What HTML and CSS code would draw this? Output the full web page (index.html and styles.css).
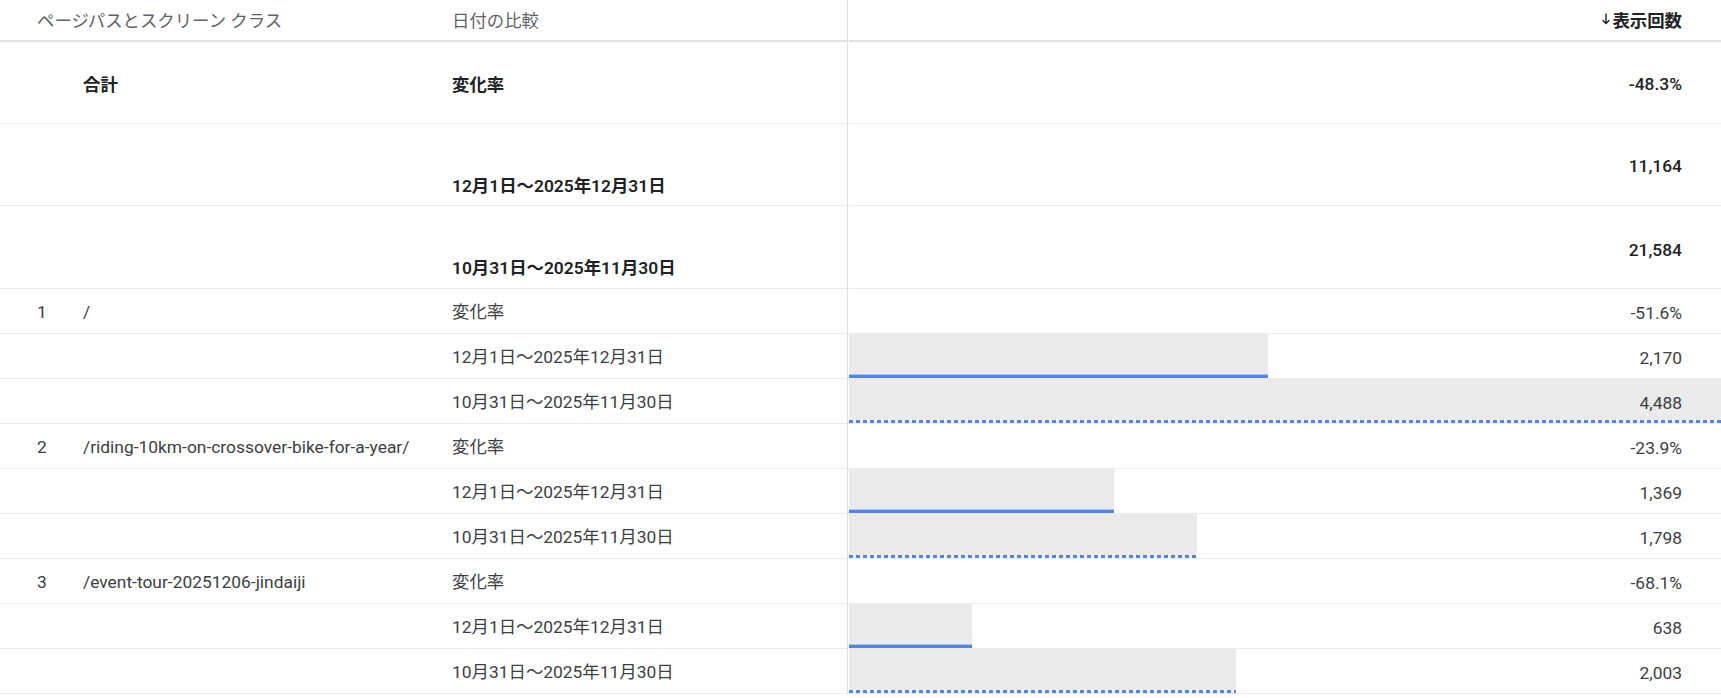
FILE: index.html
```html
<!DOCTYPE html>
<html lang="ja">
<head>
<meta charset="utf-8">
<title>ページパスとスクリーン クラス</title>
<link rel="stylesheet" href="styles.css">
</head>
<body>
<div class="report">
  <div class="row head">
    <div class="left">
      <div class="cell hlabel span2">ページパスとスクリーン クラス</div>
      <div class="cell hlabel">日付の比較</div>
    </div>
    <div class="vline"></div>
    <div class="right">
      <div class="num hmetric"><svg class="arrow" width="10" height="13" viewBox="0 0 10 13"><path d="M5 1.5V11.5M1.6 8.2L5 11.6L8.4 8.2" fill="none" stroke="#202124" stroke-width="1.4"/></svg>表示回数</div>
    </div>
  </div>

  <div class="row sum">
    <div class="left">
      <div class="cell"></div>
      <div class="cell">合計</div>
      <div class="cell">変化率</div>
    </div>
    <div class="vline"></div>
    <div class="right"><div class="num">-48.3%</div></div>
  </div>
  <div class="row sum">
    <div class="left bottom">
      <div class="cell"></div>
      <div class="cell"></div>
      <div class="cell">12月1日～2025年12月31日</div>
    </div>
    <div class="vline"></div>
    <div class="right"><div class="num">11,164</div></div>
  </div>
  <div class="row sum last">
    <div class="left bottom">
      <div class="cell"></div>
      <div class="cell"></div>
      <div class="cell">10月31日～2025年11月30日</div>
    </div>
    <div class="vline"></div>
    <div class="right"><div class="num">21,584</div></div>
  </div>

  <div class="row data">
    <div class="left">
      <div class="cell idx">1</div>
      <div class="cell">/</div>
      <div class="cell">変化率</div>
    </div>
    <div class="vline"></div>
    <div class="right"><div class="num">-51.6%</div></div>
  </div>
  <div class="row data">
    <div class="left">
      <div class="cell"></div>
      <div class="cell"></div>
      <div class="cell">12月1日～2025年12月31日</div>
    </div>
    <div class="vline"></div>
    <div class="right"><div class="bar solid" style="width:48.1%"></div><div class="num">2,170</div></div>
  </div>
  <div class="row data">
    <div class="left">
      <div class="cell"></div>
      <div class="cell"></div>
      <div class="cell">10月31日～2025年11月30日</div>
    </div>
    <div class="vline"></div>
    <div class="right"><div class="bar dotted" style="width:100%"></div><div class="num">4,488</div></div>
  </div>

  <div class="row data">
    <div class="left">
      <div class="cell idx">2</div>
      <div class="cell">/riding-10km-on-crossover-bike-for-a-year/</div>
      <div class="cell">変化率</div>
    </div>
    <div class="vline"></div>
    <div class="right"><div class="num">-23.9%</div></div>
  </div>
  <div class="row data">
    <div class="left">
      <div class="cell"></div>
      <div class="cell"></div>
      <div class="cell">12月1日～2025年12月31日</div>
    </div>
    <div class="vline"></div>
    <div class="right"><div class="bar solid" style="width:30.35%"></div><div class="num">1,369</div></div>
  </div>
  <div class="row data">
    <div class="left">
      <div class="cell"></div>
      <div class="cell"></div>
      <div class="cell">10月31日～2025年11月30日</div>
    </div>
    <div class="vline"></div>
    <div class="right"><div class="bar dotted" style="width:39.86%"></div><div class="num">1,798</div></div>
  </div>

  <div class="row data">
    <div class="left">
      <div class="cell idx">3</div>
      <div class="cell">/event-tour-20251206-jindaiji</div>
      <div class="cell">変化率</div>
    </div>
    <div class="vline"></div>
    <div class="right"><div class="num">-68.1%</div></div>
  </div>
  <div class="row data">
    <div class="left">
      <div class="cell"></div>
      <div class="cell"></div>
      <div class="cell">12月1日～2025年12月31日</div>
    </div>
    <div class="vline"></div>
    <div class="right"><div class="bar solid" style="width:14.15%"></div><div class="num">638</div></div>
  </div>
  <div class="row data">
    <div class="left">
      <div class="cell"></div>
      <div class="cell"></div>
      <div class="cell">10月31日～2025年11月30日</div>
    </div>
    <div class="vline"></div>
    <div class="right"><div class="bar dotted" style="width:44.4%"></div><div class="num">2,003</div></div>
  </div>
</div>
</body>
</html>
```

FILE: styles.css
```css
* { box-sizing: border-box; }
html, body { margin: 0; padding: 0; background: #ffffff; }
body {
  font-family: Roboto, "Noto Sans CJK JP", sans-serif;
  font-size: 17.4px;
  line-height: 20px;
  color: #3c4043;
}
.report { width: 1721px; }
.row { display: flex; }
.row.head { height: 42px; }
.row.sum { height: 82px; }
.row.sum.last { height: 83px; }
.row.data { height: 45px; }

.left {
  width: 847px;
  flex: none;
  display: grid;
  grid-template-columns: 83px 369px 1fr;
  border-bottom: 1px solid #ececec;
}
.vline { width: 1px; flex: none; background: #dedede; }
.right {
  flex: 1;
  margin-left: 1px;
  display: grid;
  grid-template-columns: 1fr;
  grid-template-rows: 1fr;
  border-bottom: 1px solid #ececec;
}
.head .left, .head .right { border-bottom: 2px solid #e2e2e2; }

.cell { display: flex; align-items: center; white-space: nowrap; }
.cell:first-child { padding-left: 37px; }
.data .cell { padding-top: 2px; }
.hlabel { color: #5f6368; padding-top: 1px; }
.span2 { grid-column: 1 / 3; padding-left: 37px; }

.sum { color: #202124; font-weight: 600; }
.sum .num { font-weight: 500; }
.sum .left > .cell { padding-top: 4px; }
.left.bottom > .cell { align-items: flex-end; padding-bottom: 9px; padding-top: 0; }
.last .left.bottom > .cell { padding-bottom: 10px; }

.num, .bar { grid-area: 1 / 1; }
.num {
  justify-self: end;
  align-self: center;
  padding-right: 39px;
  white-space: nowrap;
}
.data .num { padding-top: 3px; }
.sum .num { padding-top: 3px; }
.last .num { padding-top: 5px; }
.hmetric {
  color: #202124;
  font-weight: 600;
  display: flex;
  align-items: center;
  padding-top: 1px;
}
.arrow { margin-right: 1px; margin-top: -4px; }

.bar { justify-self: start; align-self: stretch; background: #ebebeb; }
.bar.solid {
  background: linear-gradient(to top, #5085ec 0 3px, #a9c3f3 3px 4px, #ebebeb 4px);
}
.bar.dotted {
  background:
    repeating-linear-gradient(90deg, #5085ec 0 4px, #f3f6fc 4px 7px) left bottom / 100% 3px no-repeat,
    #ebebeb;
}
```
